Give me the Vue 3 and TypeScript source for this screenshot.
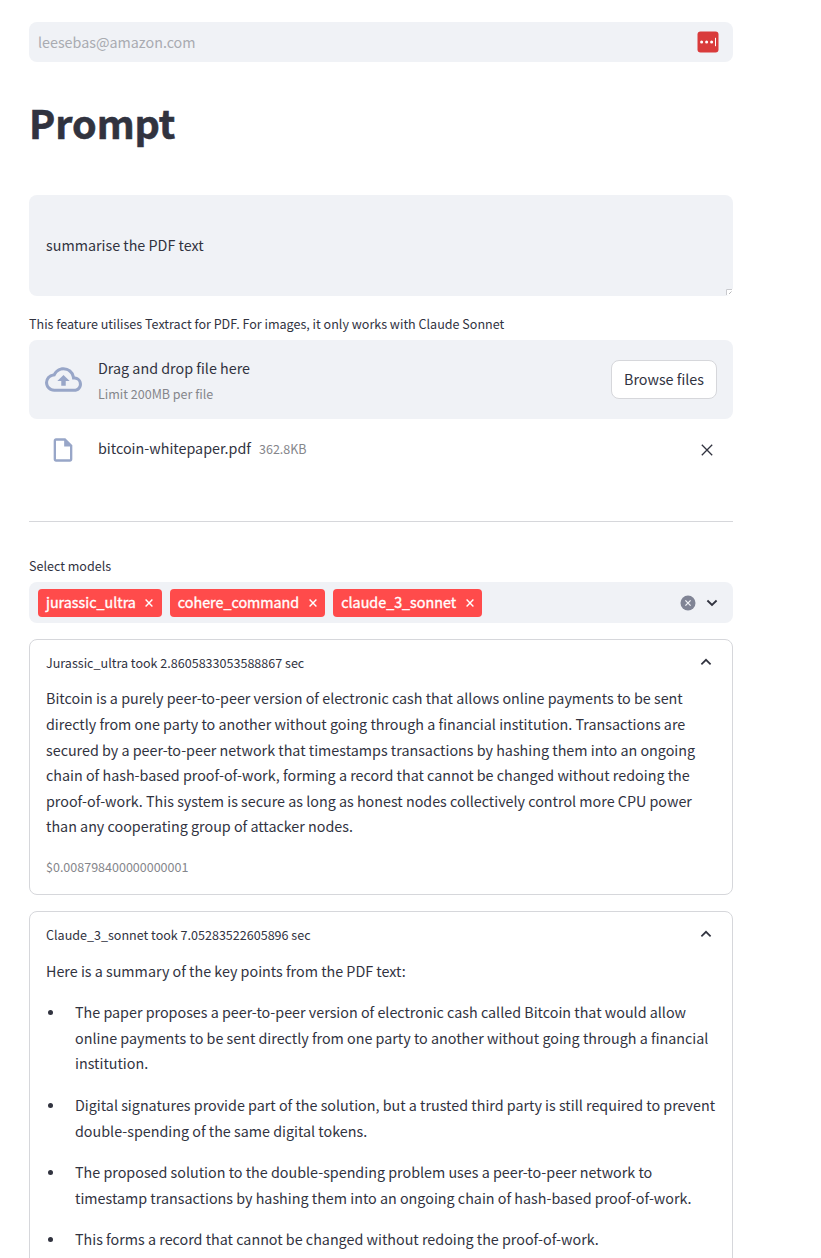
<script setup lang="ts">
interface Bullet { lines: string[] }

const models: string[] = ['jurassic_ultra', 'cohere_command', 'claude_3_sonnet']

const jurassicLines: string[] = [
  'Bitcoin is a purely peer-to-peer version of electronic cash that allows online payments to be sent',
  'directly from one party to another without going through a financial institution. Transactions are',
  'secured by a peer-to-peer network that timestamps transactions by hashing them into an ongoing',
  'chain of hash-based proof-of-work, forming a record that cannot be changed without redoing the',
  'proof-of-work. This system is secure as long as honest nodes collectively control more CPU power',
  'than any cooperating group of attacker nodes.',
]

const bullets: Bullet[] = [
  { lines: [
    'The paper proposes a peer-to-peer version of electronic cash called Bitcoin that would allow',
    'online payments to be sent directly from one party to another without going through a financial',
    'institution.',
  ] },
  { lines: [
    'Digital signatures provide part of the solution, but a trusted third party is still required to prevent',
    'double-spending of the same digital tokens.',
  ] },
  { lines: [
    'The proposed solution to the double-spending problem uses a peer-to-peer network to',
    'timestamp transactions by hashing them into an ongoing chain of hash-based proof-of-work.',
  ] },
  { lines: ['This forms a record that cannot be changed without redoing the proof-of-work.'] },
]
</script>

<template>
  <main class="page">
    <div class="field email">
      <span>leesebas@amazon.com</span>
      <svg class="pass" width="22" height="22" viewBox="0 0 22 22">
        <rect x=".5" y=".5" width="21" height="21" rx="3" fill="#d93b3b" />
        <g fill="#fff">
          <circle cx="4.6" cy="11" r="1.5" /><circle cx="9.6" cy="11" r="1.5" /><circle cx="14.6" cy="11" r="1.5" />
          <rect x="18" y="6.8" width="1" height="8.4" />
        </g>
      </svg>
    </div>

    <h1>Prompt</h1>

    <div class="field prompt">
      <span>summarise the PDF text</span>
      <svg class="grip" width="7" height="6" viewBox="0 0 7 6">
        <rect width="7" height="6" fill="#fff" />
        <path d="M.5 6V.5H6" fill="none" stroke="#c9cace" />
        <path d="M3 5L5.5 2.5" stroke="#a5a6aa" stroke-width=".8" />
      </svg>
    </div>

    <div class="label upload-label">This feature utilises Textract for PDF. For images, it only works with Claude Sonnet</div>
    <div class="field drop">
      <svg class="cloud" width="37" height="37" viewBox="0 0 24 24" fill="#98a6c8">
        <path d="M19.35 10.04A7.49 7.49 0 0 0 12 4C9.11 4 6.6 5.64 5.35 8.04A5.994 5.994 0 0 0 0 14c0 3.31 2.69 6 6 6h13c2.76 0 5-2.24 5-5 0-2.64-2.05-4.78-4.65-4.96zM19 18H6c-2.21 0-4-1.79-4-4 0-2.05 1.53-3.76 3.56-3.97l1.07-.11.5-.95A5.469 5.469 0 0 1 12 6c2.62 0 4.88 1.86 5.39 4.43l.3 1.5 1.53.11A2.98 2.98 0 0 1 22 15c0 1.65-1.35 3-3 3zM8 13h2.55v3h2.9v-3H16l-4-4z" />
      </svg>
      <div class="drop-text">
        <div>Drag and drop file here</div>
        <div class="small">Limit 200MB per file</div>
      </div>
      <button type="button">Browse files</button>
    </div>

    <div class="file">
      <svg class="doc" width="28" height="28" viewBox="0 0 24 24" fill="#98a6c8">
        <path d="M14 2H6c-1.1 0-1.99.9-1.99 2L4 20c0 1.1.89 2 1.99 2H18c1.1 0 2-.9 2-2V8l-6-6zM6 20V4h7v5h5v11H6z" />
      </svg>
      <span class="name">bitcoin-whitepaper.pdf</span>
      <span class="small size">362.8KB</span>
      <svg class="remove" width="12" height="12" viewBox="0 0 12 12"><path d="M.8.8l10.4 10.4M11.2.8L.8 11.2" fill="none" stroke="#31333f" stroke-width="1.3" /></svg>
    </div>

    <hr>

    <div class="label select-label">Select models</div>
    <div class="field select">
      <span v-for="m in models" :key="m" class="tag">
        <span>{{ m }}</span>
        <svg width="8" height="8" viewBox="0 0 8 8"><path d="M.6.6l6.8 6.8M7.4.6L.6 7.4" fill="none" stroke="#fff" stroke-width="1.4" /></svg>
      </span>
      <svg class="clear" width="16" height="16" viewBox="0 0 16 16">
        <circle cx="8" cy="8" r="7.5" fill="#808495" />
        <path d="M5.4 5.4l5.2 5.2M10.6 5.4l-5.2 5.2" stroke="#f0f2f6" stroke-width="1.3" />
      </svg>
      <svg class="down" width="12" height="8" viewBox="0 0 12 8"><path d="M1.4 1.5L6 6l4.6-4.5" fill="none" stroke="#31333f" stroke-width="1.8" /></svg>
    </div>

    <section class="card first">
      <header>
        <span>Jurassic_ultra took 2.8605833053588867 sec</span>
        <svg width="12" height="8" viewBox="0 0 12 8"><path d="M1.4 6.3L6 1.8l4.6 4.5" fill="none" stroke="#31333f" stroke-width="1.7" /></svg>
      </header>
      <p><span v-for="l in jurassicLines" :key="l" class="line">{{ l }}</span></p>
      <div class="small cost">$0.008798400000000001</div>
    </section>

    <section class="card second">
      <header>
        <span>Claude_3_sonnet took 7.05283522605896 sec</span>
        <svg width="12" height="8" viewBox="0 0 12 8"><path d="M1.4 6.3L6 1.8l4.6 4.5" fill="none" stroke="#31333f" stroke-width="1.7" /></svg>
      </header>
      <p>Here is a summary of the key points from the PDF text:</p>
      <ul>
        <li v-for="b in bullets" :key="b.lines[0]">
          <span v-for="l in b.lines" :key="l" class="line">{{ l }}</span>
        </li>
      </ul>
    </section>
  </main>
</template>

<style>
body { margin: 0; background: #fff; }
</style>

<style scoped>
.page {
  box-sizing: border-box;
  width: 821px;
  height: 1258px;
  overflow: hidden;
  padding: 22px 88px 0 29px;
  color: #31333f;
  font-family: "Noto Sans CJK SC", "Source Sans Pro", sans-serif;
  font-size: 14.325px;
  line-height: 25.6px;
  white-space: nowrap;
}
.field {
  box-sizing: border-box;
  display: flex;
  align-items: center;
  background: #f0f2f6;
  border-radius: 8px;
}
.email { height: 40px; padding: 0 14px 0 9px; color: #a9abb1; }
.pass { margin-left: auto; }
h1 {
  height: 53px;
  margin: 33px 0 0;
  font-size: 39.4px;
  line-height: 53px;
  font-weight: 700;
  -webkit-text-stroke: .6px #31333f;
}
.prompt { position: relative; height: 101px; margin-top: 47px; padding: 0 17px 2px; }
.grip { position: absolute; right: 0; bottom: 1px; }
.label { font-size: 12.55px; line-height: 22px; }
.upload-label { margin-top: 17px; margin-bottom: 5px; }
.small { font-size: 12.53px; line-height: 20px; color: #85868b; }
.drop { height: 79px; padding: 0 16px; }
.cloud { margin-right: 16px; }
.drop-text .small { margin-top: 3px; }
button {
  box-sizing: border-box;
  width: 106px;
  height: 39px;
  margin-left: auto;
  padding: 0 0 2px;
  border: 1px solid #d6d7db;
  border-radius: 8px;
  background: #fff;
  color: inherit;
  font: inherit;
}
.file { display: flex; align-items: center; height: 28px; padding: 0 20px; margin-top: 17px; }
.doc { margin-right: 21px; }
.name { margin-right: 8px; padding-bottom: 4px; }
.size { padding-bottom: 2px; }
.remove { margin-left: auto; }
hr { height: 1px; margin: 57px 0 0; border: 0; background: #d6d7db; }
.select-label { margin-top: 33px; margin-bottom: 5px; }
.select { height: 41px; padding: 0 15px 0 9px; }
.tag {
  box-sizing: border-box;
  display: flex;
  align-items: center;
  height: 28px;
  margin-right: 8px;
  padding: 0 8.5px 0 8px;
  gap: 9.5px;
  border-radius: 4px;
  background: #ff4b4b;
  color: #fff;
  -webkit-text-stroke: .35px #fff;
}
.tag span { padding-bottom: 2px; }
.clear { margin-left: auto; margin-right: 10px; }
.card {
  box-sizing: border-box;
  margin-top: 16px;
  padding: 0 16px;
  border: 1px solid #d6d7db;
  border-radius: 8px;
}
.first { height: 256px; }
.second { height: 500px; }
header {
  display: flex;
  align-items: center;
  justify-content: space-between;
  height: 46px;
  padding-right: 4px;
  font-size: 12.55px;
}
header svg { margin-bottom: 2px; }
p { margin: 0; }
.first p { margin-top: -.6px; }
.line { display: block; }
.cost { margin-top: 17.6px; }
ul { margin: 15.7px 0 0; padding: 0; list-style: none; }
li { position: relative; margin: 0 0 16px; padding-left: 29px; }
li::before {
  content: "";
  position: absolute;
  left: 2px;
  top: 11px;
  width: 5px;
  height: 5px;
  border-radius: 50%;
  background: #31333f;
}
</style>
